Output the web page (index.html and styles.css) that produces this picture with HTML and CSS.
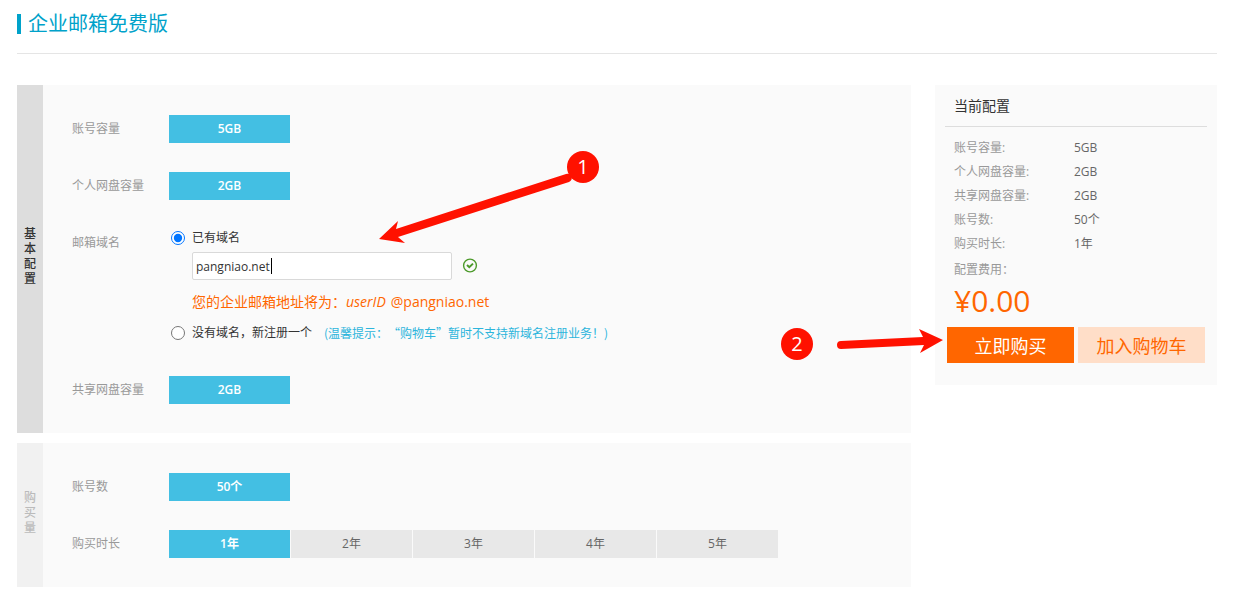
FILE: index.html
```html
<!DOCTYPE html>
<html lang="zh-CN">

<head>
    <meta charset="UTF-8">
    <meta name="viewport" content="width=device-width, initial-scale=1.0">
    <title>企业邮箱免费版</title>
    <link rel="stylesheet" href="styles.css">
</head>

<body>
    <header class="heading">
        <h1 class="title">企业邮箱免费版</h1>
    </header>
    <main class="main">
        <form class="config">
            <section class="panel">
                <h2 class="tab">基本配置</h2>
                <div class="rows">
                    <div class="row">
                        <span class="name">账号容量</span>
                        <button type="button" class="option on">5GB</button>
                    </div>
                    <div class="row">
                        <span class="name">个人网盘容量</span>
                        <button type="button" class="option on">2GB</button>
                    </div>
                    <div class="row">
                        <span class="name">邮箱域名</span>
                        <div class="domain">
                            <label class="choice"><input type="radio" name="domain" class="radio" checked>已有域名</label>
                            <div class="field">
                                <input type="text" class="domain-text" value="pangniao.net" aria-label="已有域名">
                                <span class="caret"></span>
                                <svg class="ok" viewBox="0 0 16 16" width="16" height="16">
                                    <circle cx="8" cy="7.5" r="6.4" fill="none" stroke="#4c9a2a" stroke-width="1.4" />
                                    <path d="M5 7L7.3 9.2L11 5.6" fill="none" stroke="#4c9a2a" stroke-width="2" />
                                </svg>
                            </div>
                            <p class="address">您的企业邮箱地址将为：<em class="user">userID</em>@pangniao.net</p>
                            <label class="choice"><input type="radio" name="domain" class="radio">没有域名，新注册一个<span class="tip">(温馨提示：“购物车”暂时不支持新域名注册业务！)</span></label>
                        </div>
                    </div>
                    <div class="row">
                        <span class="name">共享网盘容量</span>
                        <button type="button" class="option on">2GB</button>
                    </div>
                </div>
                <!-- step 1 -->
                <div class="step step1">
                    <svg class="arrow" viewBox="0 0 222 96" width="222" height="96">
                        <path d="M0 90L19 72L17 80L187 25A4 4 0 0 1 190 33L19 88L26 94Z" fill="#ff1100" />
                    </svg>
                    <span class="number">1</span>
                </div>
            </section>
            <section class="panel">
                <h2 class="tab light">购买量</h2>
                <div class="rows">
                    <div class="row">
                        <span class="name">账号数</span>
                        <button type="button" class="option on">50个</button>
                    </div>
                    <div class="row">
                        <span class="name">购买时长</span>
                        <div class="years">
                            <button type="button" class="option on">1年</button>
                            <button type="button" class="option">2年</button>
                            <button type="button" class="option">3年</button>
                            <button type="button" class="option">4年</button>
                            <button type="button" class="option">5年</button>
                        </div>
                    </div>
                </div>
            </section>
        </form>
        <aside class="summary">
            <h2 class="summary-title">当前配置</h2>
            <dl class="list">
                <dt>账号容量:</dt>
                <dd>5GB</dd>
                <dt>个人网盘容量:</dt>
                <dd>2GB</dd>
                <dt>共享网盘容量:</dt>
                <dd>2GB</dd>
                <dt>账号数:</dt>
                <dd>50个</dd>
                <dt>购买时长:</dt>
                <dd>1年</dd>
            </dl>
            <p class="cost">配置费用：</p>
            <p class="price">¥0.00</p>
            <div class="buttons">
                <button type="button" class="buy">立即购买</button>
                <button type="button" class="buy cart">加入购物车</button>
            </div>
            <!-- step 2 -->
            <div class="step step2">
                <span class="number">2</span>
                <svg class="arrow" viewBox="0 0 164 32" width="164" height="32">
                    <path d="M60 13L142 9L138 1L162 12L139 25L143 17L60 21A4 4 0 0 1 60 13Z" fill="#ff1100" />
                </svg>
            </div>
        </aside>
    </main>
</body>

</html>
```
FILE: styles.css
```css
* {
    box-sizing: border-box;
}

body {
    margin: 0;
    padding: 0 22px 20px 17px;
    background-color: #fff;
    color: #333;
    font-family: "Open Sans", "Noto Sans CJK SC", sans-serif;
    font-size: 12px;
    line-height: 18px;
}

h1,
h2,
p,
dl,
dd {
    margin: 0;
    font-weight: normal;
}

button,
input {
    font-family: inherit;
    font-size: 12px;
}

.heading {
    padding: 14px 0 19px;
    border-bottom: 1px solid #e5e5e5;
}

.title {
    padding-left: 7px;
    border-left: 4px solid #00a2ca;
    color: #00a2ca;
    font-size: 20px;
    line-height: 20px;
}

.main {
    display: flex;
    align-items: flex-start;
    gap: 24px;
    margin-top: 31px;
}

.config {
    flex: 1;
    display: flex;
    flex-direction: column;
    gap: 10px;
}

.panel {
    position: relative;
    display: flex;
    background-color: #fafafa;
}

.tab {
    display: flex;
    align-items: center;
    width: 26px;
    padding: 0 7px 6px;
    background-color: #ddd;
    color: #333;
    font-size: 12px;
    font-weight: 500;
    line-height: 15px;
    word-break: break-all;
}

.light {
    background-color: #f1f1f1;
    color: #bbb;
}

.rows {
    flex: 1;
    display: flex;
    flex-direction: column;
    gap: 29px;
    padding: 30px 29px 29px;
}

.row {
    display: flex;
    align-items: flex-start;
}

.name {
    width: 97px;
    color: #999;
    line-height: 28px;
}

.option {
    width: 121px;
    height: 28px;
    padding: 0 0 2px;
    border: none;
    background-color: #e8e8e8;
    color: #666;
}

.on {
    background-color: #43bfe3;
    color: #fff;
    font-weight: 600;
}

.years {
    display: flex;
    gap: 1px;
}

.domain {
    padding-bottom: 5px;
}

.choice {
    display: flex;
    align-items: center;
}

.radio {
    width: 14px;
    height: 14px;
    margin: 0 7px 0 2px;
}

.tip {
    margin-left: 12px;
    color: #2cb5dc;
    font-family: "Noto Sans CJK SC", sans-serif;
    text-spacing-trim: space-all;
}

.field {
    position: relative;
    display: flex;
    align-items: center;
    gap: 10px;
    margin: 5px 0 11px 23px;
}

.domain-text {
    width: 260px;
    height: 28px;
    padding: 0 3px;
    border: 1px solid #d9d9d9;
    border-radius: 2px;
    background-color: #fff;
    color: #333;
}

/* text cursor after the domain */
.caret {
    position: absolute;
    top: 6px;
    left: 79px;
    width: 1px;
    height: 16px;
    background-color: #000;
}

.address {
    margin: 0 0 11px 23px;
    color: #ff6600;
    font-size: 14px;
    line-height: 22px;
}

.user {
    margin-right: 5px;
}

.summary {
    position: relative;
    width: 282px;
    padding: 0 10px 22px;
    background-color: #fafafa;
}

.summary-title {
    padding-left: 9px;
    border-bottom: 1px solid #ddd;
    font-size: 14px;
    line-height: 41px;
}

.list {
    display: grid;
    grid-template-columns: 120px 1fr;
    padding: 9px 9px 2px;
    line-height: 24px;
}

.list dt,
.cost {
    color: #999;
}

.list dd {
    color: #666;
}

.cost {
    padding-left: 9px;
    line-height: 24px;
}

.price {
    padding-left: 9px;
    color: #ff6600;
    font-size: 30px;
    line-height: 37px;
}

.buttons {
    display: flex;
    gap: 4px;
    margin: 8px 2px 0;
}

.buy {
    flex: 1;
    height: 36px;
    padding: 0;
    border: none;
    background-color: #ff6600;
    color: #fff;
    font-size: 18px;
}

.cart {
    background-color: #ffdec8;
    color: #ff6600;
}

/* numbered steps drawn over the page */
.step {
    position: absolute;
    pointer-events: none;
}

.step1 {
    top: 64px;
    left: 362px;
}

.step2 {
    top: 243px;
    left: -154px;
}

.arrow {
    display: block;
}

.number {
    position: absolute;
    top: 0;
    width: 32px;
    height: 32px;
    border-radius: 50%;
    background-color: #ff1100;
    color: #fff;
    font-size: 20px;
    line-height: 32px;
    text-align: center;
}

.step1 .number {
    top: 2px;
    right: 2px;
}
```
